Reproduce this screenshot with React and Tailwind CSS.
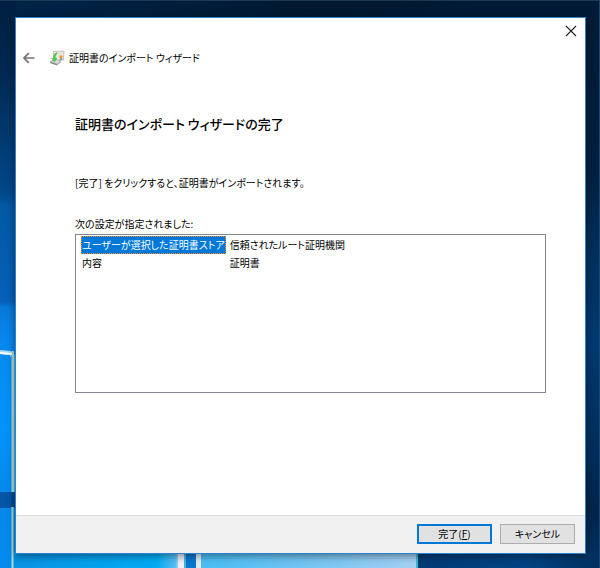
import React from "react";

const settings = [
  { name: "ユーザーが選択した証明書ストア", value: "信頼されたルート証明機関", selected: true },
  { name: "内容", value: "証明書", selected: false },
];

function Wallpaper() {
  return (
    <svg
      className="absolute inset-0 h-full w-full"
      viewBox="0 0 600 568"
      preserveAspectRatio="none"
      aria-hidden="true"
    >
      <defs>
        <linearGradient id="left" x1="0" y1="0" x2="0" y2="1">
          <stop offset="0" stopColor="#001f41" />
          <stop offset="0.12" stopColor="#002750" />
          <stop offset="0.24" stopColor="#003a70" />
          <stop offset="0.34" stopColor="#00488b" />
          <stop offset="0.36" stopColor="#0458a4" />
          <stop offset="0.53" stopColor="#0660b8" />
          <stop offset="0.54" stopColor="#0878d8" />
          <stop offset="0.6" stopColor="#0788ee" />
          <stop offset="0.75" stopColor="#0494fb" />
          <stop offset="0.88" stopColor="#0787ea" />
          <stop offset="1" stopColor="#058bf0" />
        </linearGradient>
        <linearGradient id="right" x1="0" y1="0" x2="0" y2="1">
          <stop offset="0" stopColor="#001a36" />
          <stop offset="0.3" stopColor="#00203f" />
          <stop offset="0.45" stopColor="#00305f" />
          <stop offset="0.6" stopColor="#003a72" />
          <stop offset="0.8" stopColor="#002d5c" />
          <stop offset="0.9" stopColor="#00244a" />
          <stop offset="1" stopColor="#003468" />
        </linearGradient>
        <linearGradient id="top" x1="0" y1="0" x2="1" y2="0">
          <stop offset="0" stopColor="#002448" />
          <stop offset="0.5" stopColor="#001831" />
          <stop offset="1" stopColor="#001a36" />
        </linearGradient>
        <linearGradient id="paneA" x1="0" y1="0" x2="1" y2="0">
          <stop offset="0" stopColor="#0a92e4" />
          <stop offset="0.85" stopColor="#00acf4" />
          <stop offset="0.96" stopColor="#58bdf4" />
          <stop offset="1" stopColor="#e8f2fa" />
        </linearGradient>
        <linearGradient id="paneB" x1="0" y1="0" x2="1" y2="0">
          <stop offset="0" stopColor="#48bdf5" />
          <stop offset="0.5" stopColor="#74c5f3" />
          <stop offset="1" stopColor="#a4d0f4" />
        </linearGradient>
        <linearGradient id="floor" x1="0" y1="0" x2="1" y2="0">
          <stop offset="0" stopColor="#003a75" />
          <stop offset="0.6" stopColor="#004483" />
          <stop offset="1" stopColor="#00305f" />
        </linearGradient>
      </defs>
      <rect width="600" height="18" fill="url(#top)" />
      <rect y="1" width="16" height="567" fill="url(#left)" />
      <rect x="584" y="1" width="16" height="567" fill="url(#right)" />
      <rect width="600" height="1" fill="#1b3a55" />
      <rect x="599" width="1" height="568" fill="#1b466f" />
      <path d="M0 352 L10 353 Q13 354 13 359" fill="none" stroke="#a9dcf2" strokeWidth="4" />
      <path d="M0 353 L12 354" stroke="#f6fbf8" strokeWidth="2" />
      <rect x="11" y="355" width="4" height="138" fill="#58b8dc" />
      <rect x="12" y="351" width="2" height="142" fill="#a5dbe5" />
      <rect y="492" width="16" height="16" fill="#0556a5" />
      <rect x="11" y="494" width="5" height="13" fill="#064991" />
      <rect x="14" y="552" width="168" height="16" fill="url(#paneA)" />
      <rect x="11" y="507" width="3" height="61" fill="#58b8dc" />
      <rect x="12" y="507" width="1" height="61" fill="#a5dbe5" />
      <rect x="178" y="552" width="6" height="16" fill="#eceff4" />
      <rect x="184" y="552" width="2" height="16" fill="#45b5de" />
      <rect x="186" y="552" width="10" height="16" fill="#0878d0" />
      <rect x="196" y="552" width="5" height="16" fill="#dfeef6" />
      <rect x="201" y="552" width="215" height="16" fill="url(#paneB)" />
      <rect x="416" y="552" width="2" height="16" fill="#38b6d0" />
      <rect x="418" y="552" width="181" height="16" fill="url(#floor)" />
    </svg>
  );
}

function CertificateIcon() {
  return (
    <svg className="h-4 w-4 shrink-0" viewBox="0 0 16 16" aria-hidden="true">
      <path d="M4.5 1.5 L15 1 L14.5 10 L5 10.5 Z" fill="#f0eadf" stroke="#b9b4ac" strokeWidth="0.8" />
      <path d="M8 3.5 L13 3.2" stroke="#d5cfc7" strokeWidth="0.7" />
      <path d="M11 7.5 L10.5 10.6 L12 9.8 L13.3 10.6 L13 7.5 Z" fill="#8294cf" />
      <circle cx="12" cy="6.8" r="1.6" fill="#ee9b24" />
      <path d="M1 11.5 L6 9.5 L12 11 L8 14 Z" fill="#dadada" stroke="#999" strokeWidth="0.6" />
      <path d="M1 11.5 L8 14 L8 15.6 L1.3 13.3 Z" fill="#8a908b" />
      <path d="M8 14 L12 11 L12 12.5 L8 15.6 Z" fill="#b3b6b4" />
      <path d="M7.6 2.6 Q4 4.5 4.4 8.2 L2.6 8.4 L5.4 12 L8 8 L6.3 8.1 Q6 5.5 8 3.5 Z" fill="#48cf4d" stroke="#39b948" strokeWidth="0.4" />
    </svg>
  );
}

export default function App() {
  return (
    <div className="relative flex min-h-screen bg-[#001f41] pt-[17px] pr-3.5 pb-3.5 pl-[15px] font-['Noto_Sans_CJK_JP',sans-serif] text-[10px] leading-[18px] text-black [font-feature-settings:'palt','kern']">
      <Wallpaper />
      <main className="relative flex min-w-0 flex-1 flex-col border border-[#2b83d0] bg-white shadow-[0_2px_8px_rgba(0,0,0,0.45)]">
        <div className="flex justify-end">
          <button type="button" aria-label="閉じる" className="flex h-[26px] w-7 items-center justify-center">
            <svg className="h-3 w-3" viewBox="0 0 12 12" fill="none" stroke="#222" strokeWidth="1.1">
              <path d="M1 1 L11 11 M11 1 L1 11" />
            </svg>
          </button>
        </div>
        <header className="flex h-7 items-center gap-1 pl-[5px]">
          <button type="button" aria-label="戻る" className="mr-2 flex h-4 w-4 items-center justify-center">
            <svg className="h-3 w-3" viewBox="0 0 12 12" fill="none" stroke="#737373" strokeWidth="1.7">
              <path d="M11.5 6 H1.2 M5.8 1.2 L1 6 L5.8 10.8" />
            </svg>
          </button>
          <CertificateIcon />
          <span>証明書のインポート ウィザード</span>
        </header>

        <section className="flex flex-1 flex-col pt-10 pr-[39px] pl-[59px]">
          <h1 className="text-[13px] leading-6 font-medium">証明書のインポート ウィザードの完了</h1>
          <p className="mt-[38px]">[完了] をクリックすると、証明書がインポートされます。</p>
          <p id="settings-label" className="mt-[23px]">次の設定が指定されました:</p>
          <div className="mt-px h-[159px] border border-[#828790] pt-px pl-[5px]">
            <table aria-labelledby="settings-label" className="border-collapse">
              <tbody>
                {settings.map((item) => (
                  <tr key={item.name} className="h-[18px]">
                    <td className="p-0 whitespace-nowrap">
                      <div
                        className={
                          item.selected
                            ? "h-[18px] border border-dotted border-[#ff8728] bg-[#0078d7] leading-4 text-white"
                            : "h-[18px] px-px"
                        }
                      >
                        {item.name}
                      </div>
                    </td>
                    <td className="p-0 pl-1 whitespace-nowrap">{item.value}</td>
                  </tr>
                ))}
              </tbody>
            </table>
          </div>
        </section>

        <footer className="flex justify-end gap-2 border-t border-[#dfdfdf] bg-[#f0f0f0] px-2.5 pt-2 pb-[9px]">
          <button
            type="button"
            className="h-5 w-[75px] border-2 border-[#0078d7] bg-[#e1e1e1] leading-4"
          >
            完了(<u>F</u>)
          </button>
          <button type="button" className="h-5 w-[75px] border border-[#adadad] bg-[#e1e1e1] leading-4">
            キャンセル
          </button>
        </footer>
      </main>
    </div>
  );
}
